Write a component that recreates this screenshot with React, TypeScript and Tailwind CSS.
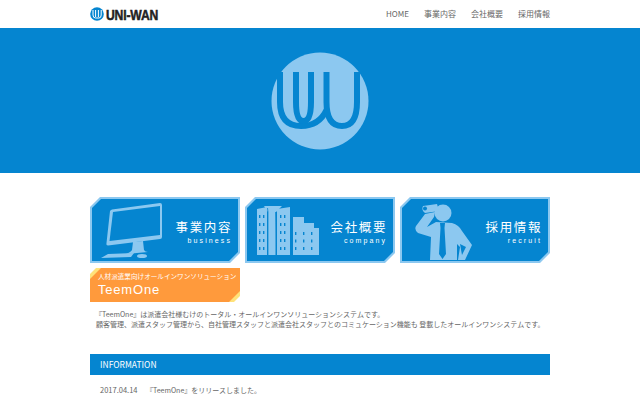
const JP = "font-['Noto_Sans_CJK_JP','Noto_Sans',sans-serif]";

function Monitor() {
  return (
    <svg width="70" height="60" viewBox="0 0 70 60" className="shrink-0">
      <path d="M12 9.5 L60 3 Q62 3 62 5 L62 37 Q62 39 60 39 L8 45.5 Q6 45.5 6.5 43 L10 11 Q10.5 10 12 9.5 Z" fill="#8cc8f0" />
      <path d="M13 12 L60 6 L60 35 L9.5 41 Z" fill="#0585d0" />
      <path d="M33 42 L43 41 L44 50 Q45 52 48 52 L26 54 Q31 52 32 50 Z" fill="#8cc8f0" />
      <path d="M8 54 L34 53 L31 57 L1 58 Z" fill="#8cc8f0" />
      <ellipse cx="42" cy="56" rx="5" ry="2" fill="#8cc8f0" />
    </svg>
  );
}

function Windows({ x, y, cols, rows, dx, dy }: { x: number; y: number; cols: number; rows: number; dx: number; dy: number }) {
  const cells = [];
  for (let r = 0; r < rows; r++) {
    for (let c = 0; c < cols; c++) {
      cells.push(<rect key={`${r}-${c}`} x={x + c * dx} y={y + r * dy} width="1.4" height="3" fill="#0585d0" />);
    }
  }
  return <>{cells}</>;
}

function Buildings() {
  return (
    <svg width="70" height="60" viewBox="0 0 70 60" className="shrink-0">
      <path d="M2 9 L12 7 L12 55 L2 55 Z" fill="#8cc8f0" />
      <path d="M9 6 L27 6 L21 12 L20.5 55 L13 55 L13 12 Z" fill="#8cc8f0" />
      <path d="M22 9 L35 7 L35 55 L22 55 Z" fill="#8cc8f0" />
      <path d="M12.5 8 L13 12 L13 55 M20.5 12 L21.5 55" stroke="#0585d0" strokeWidth="0.8" fill="none" />
      <Windows x={4} y={15} cols={2} rows={5} dx={4} dy={8} />
      <Windows x={25} y={15} cols={2} rows={5} dx={4} dy={8} />
      <path d="M38 17 L49 17 L49 23 L59 23 L59 28 L64 28 L64 55 L38 55 Z" fill="#8cc8f0" />
      <Windows x={40} y={32} cols={3} rows={3} dx={8} dy={7.5} />
    </svg>
  );
}

function Scout() {
  return (
    <svg width="70" height="60" viewBox="0 0 70 60" className="shrink-0">
      <circle cx="33" cy="13" r="8.5" fill="#8cc8f0" />
      <path d="M13 6 L27 4 L29 11 L15 13 Q11 10 13 6 Z" fill="#8cc8f0" />
      <circle cx="15" cy="8.5" r="2" fill="#0585d0" />
      <path d="M15 14 L25 12 L24 17 L17 27 L26 22 L42 23 Q49 25 52 31 L62 45 L55 60 L48 60 L50 47 L47 44 L47 60 L20 60 L21 37 L8 33 Q4 30 6 26 Z" fill="#8cc8f0" />
      <path d="M30 23 L35 23 L34.5 28 L36 54 L32.5 59 L29 54 L30.5 28 Z" fill="#0585d0" />
      <path d="M50 44 L56 47 L52 55 Z" fill="#0585d0" />
    </svg>
  );
}

function NavCard({ icon, title, sub }: { icon: React.ReactNode; title: string; sub: string }) {
  return (
    <a className="block h-[66px] w-[150px] bg-[#8cc8f0] p-[2px] [clip-path:polygon(10px_0,100%_0,100%_calc(100%-10px),calc(100%-10px)_100%,0_100%,0_10px)]">
      <div className="flex h-full items-center overflow-hidden bg-[#0585d0] pl-2 [clip-path:polygon(9px_0,100%_0,100%_calc(100%-9px),calc(100%-9px)_100%,0_100%,0_9px)]">
        <div className="w-[66px] shrink-0">{icon}</div>
        <div className="mt-[4px] flex flex-1 flex-col items-end pr-[6px] text-white">
          <div className="text-[12.5px] leading-[16px] tracking-[1.6px]">{title}</div>
          <div className="mt-[1px] text-[7px] leading-[9px] tracking-[2.1px] font-['Liberation_Sans',sans-serif]">{sub}</div>
        </div>
      </div>
    </a>
  );
}

export default function App() {
  return (
    <div className={`h-[400px] w-[640px] overflow-hidden bg-white text-[#666] ${JP}`}>
      <header className="mx-auto flex h-[28px] w-[460px] items-center justify-between">
        <div className="flex items-center gap-[2px]">
          <svg width="14" height="14" viewBox="0 0 14 14">
            <circle cx="7" cy="7" r="6.8" fill="#0585d0" />
            <path d="M3 3 V8 Q3 11 5.5 11 H9 Q11.2 11 11.2 8 V3 M5.6 3 V10 M8.4 3 V10" fill="none" stroke="#fff" strokeWidth="1" />
          </svg>
          <span className="origin-left [transform:scaleX(0.81)] text-[15px] leading-none font-bold tracking-[-0.2px] whitespace-nowrap text-[#222] [-webkit-text-stroke:0.5px_#222] font-['Liberation_Sans',sans-serif]">UNI-WAN</span>
        </div>
        <nav className="flex gap-[15px] text-[8px] text-[#666]">
          <span>HOME</span>
          <span>事業内容</span>
          <span>会社概要</span>
          <span>採用情報</span>
        </nav>
      </header>

      <section className="flex h-[145px] items-center justify-center bg-[#0585d0]">
        <svg width="98" height="98" viewBox="0 0 98 98">
          <circle cx="49" cy="49" r="48.5" fill="#8cc8f0" />
          <path d="M9 20 V50 Q9 74 30 74 Q48 74 55.5 58" fill="none" stroke="#0585d0" strokeWidth="6" />
          <path d="M25 20 V50 Q25 69 32.5 69 Q40 69 40 50 V20" fill="none" stroke="#0585d0" strokeWidth="6" />
          <path d="M55.5 20 V50 Q55.5 74 71 74 Q86 74 86 50 V20" fill="none" stroke="#0585d0" strokeWidth="6" />
        </svg>
      </section>

      <main className="mx-auto w-[460px] pt-[24px]">
        <div className="flex gap-[5px]">
          <NavCard icon={<Monitor />} title="事業内容" sub="business" />
          <NavCard icon={<Buildings />} title="会社概要" sub="company" />
          <NavCard icon={<Scout />} title="採用情報" sub="recruit" />
        </div>

        <a className="relative mt-[5px] block h-[34px] w-[150px] overflow-hidden bg-[#ff9a3c] px-[8px] pt-[2px] text-white">
          <span className="absolute top-0 left-0 h-0 w-0 border-t-[11px] border-r-[11px] border-t-[#ffe27a] border-r-transparent" />
          <span className="absolute top-0 left-0 h-0 w-0 border-t-[6px] border-r-[6px] border-t-white border-r-transparent" />
          <span className="absolute right-0 bottom-0 h-0 w-0 border-b-[11px] border-l-[11px] border-b-[#ffe27a] border-l-transparent" />
          <span className="absolute right-0 bottom-0 h-0 w-0 border-b-[6px] border-l-[6px] border-b-white border-l-transparent" />
          <div className="relative text-[6.6px] leading-[12px] whitespace-nowrap">人材派遣業向けオールインワンソリューション</div>
          <div className="relative text-[13px] leading-[16px] tracking-[0.8px] font-['Liberation_Sans',sans-serif]">TeemOne</div>
        </a>

        <p className="mt-[7px] text-[7px] leading-[10px] whitespace-nowrap text-[#666]">
          <span className="pl-[5px]">『TeemOne』は派遣会社様むけのトータル・オールインワンソリューションシステムです。</span>
          <br />
          <span className="pl-[6px]">顧客管理、派遣スタッフ管理から、自社管理スタッフと派遣会社スタッフとのコミュケーション機能も 登載したオールインワンシステムです。</span>
        </p>

        <h2 className="mt-[25px] flex h-[21px] items-center bg-[#0585d0] pl-[10px] text-[8.5px] text-white">INFORMATION</h2>
        <div className="mt-[9px] flex pl-[10px] text-[7px] leading-[12px] text-[#666]">
          <span className="w-[46px] text-[7.5px]">2017.04.14</span>
          <span>『TeemOne』をリリースしました。</span>
        </div>
      </main>
    </div>
  );
}
